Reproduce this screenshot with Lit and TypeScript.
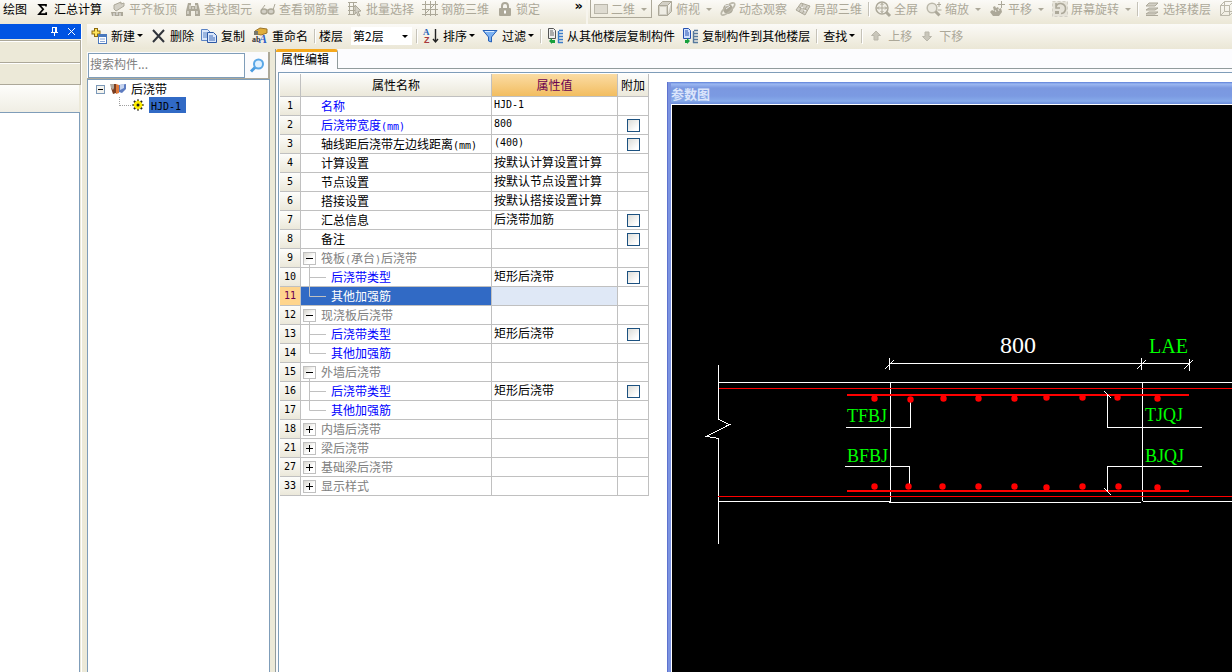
import { LitElement, html, svg, css, nothing, TemplateResult } from "lit";
import { customElement, property } from "lit/decorators.js";
import { classMap } from "lit/directives/class-map.js";

const G = "#aca899";
const L = "#d3d0c6";

const icons: Record<string, TemplateResult> = {
  sigma: svg`<path d="M11 5.5V3.8H4.2L8.2 8.3 4 13.2H11.2V11.2" fill="none" stroke="#000" stroke-width="1.7"/>`,
  align: svg`<path d="M4 4 11 1v2l3-1v3l-8 5-2-2z" fill="${L}" stroke="${G}"/><path d="M1 11h12v4H2z" fill="${G}"/><path d="M4 12v3M7 11v3M10 12v3" stroke="#eee"/>`,
  binoculars: svg`<path d="M3 2h3v3h4V2h3l2 8v5h-5v-5H6v5H1v-5z" fill="${G}"/><path d="M3 10v3M12 10v3M5 4v4M11 4v4M7 7h2" stroke="#f2f0e8"/>`,
  glasses: svg`<ellipse cx="4" cy="10.500" rx="3" ry="2.500" fill="${L}" stroke="${G}" stroke-width="1.400"/><ellipse cx="11" cy="10.500" rx="3" ry="2.500" fill="${L}" stroke="${G}" stroke-width="1.400"/><path d="M7 9h2M2 8l3-4M13 9l2-6" stroke="${G}" fill="none"/>`,
  batch: svg`<path d="M1 1.500h9M1 5.500h8M1 9.500h7M1 13.500h7M2.500 1v13M6.500 1v13" stroke="${G}" fill="none"/><path d="m8 4 6 6-3 .5 2 4-2 .5-1.500-4L8 13z" fill="${L}" stroke="${G}"/>`,
  grid: svg`<path d="M3.500 0v15M8.500 0v15M13.500 0v15M0 3.500h16M0 8.500h16M0 13.500h16M3 13 13 3" stroke="${G}" fill="none"/>`,
  lock: svg`<path d="M5 8V5q0-3 3-3t3 3v3" fill="none" stroke="${G}" stroke-width="2"/><rect x="2" y="7" width="12" height="8" rx="1" fill="${G}"/><path d="M8 9.500v3" stroke="#fff" stroke-width="2"/>`,
  cube: svg`<path d="M1.500 4.500h9v10h-9zM1.500 4.500l4-4h9l-4 4M14.500.5v10l-4 4" fill="${L}" stroke="${G}"/><path d="M3 6h6v7H3z" fill="#efede4"/>`,
  wire: svg`<path d="M1.500 4.500h9v10h-9zM1.500 4.500l4-4h9l-4 4M14.500.5v10l-4 4M5.500.5v10h9M5.500 10.500l-4 4" fill="none" stroke="#bbb8aa"/>`,
  orbit: svg`<circle cx="8" cy="8" r="5" fill="${G}"/><ellipse cx="8" cy="8" rx="8.500" ry="3" transform="rotate(-42 8 8)" fill="none" stroke="#bbb8aa" stroke-width="1.600"/><path d="m5 5 4-1M6 8l4-3" stroke="#eee"/>`,
  local: svg`<path d="m1 9 5-7 9 3-5 9z" fill="${L}" stroke="${G}"/><path d="m4 6 8 3M8 3l-4 8M12 5l-5 8" stroke="${G}"/><path d="m6 6 2 1M9 9l2 1" stroke="#fff"/>`,
  fit: svg`<circle cx="7" cy="7" r="6" fill="#f2f0e8" stroke="${G}" stroke-width="1.500"/><path d="M7 2v10M2 7h10M5.500 4 7 2.500 8.500 4M5.500 10 7 11.500 8.500 10M4 5.500 2.500 7 4 8.500M10 5.500 11.500 7 10 8.500" fill="none" stroke="${G}"/><path d="m11 11 4 4" stroke="${G}" stroke-width="3"/>`,
  zoom: svg`<circle cx="6" cy="7" r="4.800" fill="#ebe9e0" stroke="#bbb8aa" stroke-width="1.500"/><path d="m9.500 10.500 4 4" stroke="${G}" stroke-width="3"/><path d="M13 1v5M11 3.500h4M11.500 9h4" stroke="${G}"/>`,
  pan: svg`<path d="M4 15 1 11l2-2 2 1-1-4 2-1 1 2 2-1 1 2 2-1 1 4-3 4z" fill="${G}"/><path d="M12.500 0v7M9 3.500h7" stroke="${G}"/><path d="m6 9 1 2M9 8l1 2" stroke="#e8e6dc"/>`,
  rotate: svg`<rect x=".5" y=".5" width="15" height="15" fill="#e6e3d9" stroke="${L}" stroke-dasharray="3 2"/><path d="M4 6q1-4 5-3.500 5 1 4.500 6-1 4-4.500 4M4 2v5h4" fill="none" stroke="${G}" stroke-width="1.600"/><rect x="3" y="10" width="4" height="3" fill="${G}"/>`,
  floors: svg`<path d="m2 5 3-3h9l-3 3zM2 9l3-2h9l-3 2zM2 13l3-2h9l-3 2z" fill="${L}" stroke="${G}"/><path d="M2 14.500h12" stroke="${G}"/>`,
  fresh: svg`<path d="M5 0v9M.5 4.500h9" stroke="#8a6a10" stroke-width="4"/><path d="M5 1v7M1.500 4.500h7" stroke="#ffe45c" stroke-width="2"/><rect x="7.500" y="6.500" width="8" height="9" fill="#fff" stroke="#4a78bd"/><path d="M8 8h7" stroke="#4a78bd" stroke-width="2"/><path d="M9 11h5M9 13.500h5" stroke="#8aa6d6"/>`,
  cross: svg`<path d="M3 2 14 14M14 2 3 14" stroke="#30343c" stroke-width="2"/>`,
  copy: svg`<path d="M.5 1.500h6l3 3v8h-9z" fill="#dbe7fb" stroke="#5b83c4"/><path d="M2 5h4M2 7h5M2 9h5" stroke="#5b83c4"/><path d="M6.500 4.500h6l3 3v7h-9z" fill="#dbe7fb" stroke="#2c58a5"/><path d="M8 8h4M8 10h6M8 12h6" stroke="#3c68b5"/>`,
  rename: svg`<path d="m3 3 5-3 7 1v4L9 7 5 6z" fill="#e0ae3c" stroke="#9a742a"/><path d="M2 3h4v4H2z" fill="#77776b"/><text x="0" y="14" font-size="8" font-family="Liberation Serif" font-weight="bold" fill="#333">ab</text><text x="7" y="15" font-size="12" font-family="Liberation Serif" font-weight="bold" font-style="italic" fill="#2b5fcb">A</text>`,
  sort: svg`<text x="0" y="7" font-size="9" font-family="Liberation Serif" font-weight="bold" fill="#2463b8">A</text><text x="1" y="15" font-size="9" font-family="Liberation Sans" font-weight="bold" fill="#a8383c">Z</text><path d="M12.500 1v13M10 11l2.500 3L15 11" fill="none" stroke="#222" stroke-width="1.400"/>`,
  filter: svg`<path d="M1 2.500h14L9.500 9v5l-3-1V9z" fill="#7db2f2" stroke="#2560b8"/><path d="M3 3.500h9" stroke="#d8ebff"/>`,
  from: svg`<path d="M1.500.5h5l2 2v8h-7z" fill="#eee" stroke="#555"/><path d="M3 3h3M3 5h4M3 7h4" stroke="#666"/><path d="M12 2.500h4M11 5.500h5M11 8.500h5M11 11.500h5M11 14.500h5M11.500 3v12" stroke="#3a7cc9" stroke-width="1.400"/><path d="m2 13 3-3v2h3v3H5v1z" fill="#17a03c"/>`,
  to: svg`<path d="M1.500.5h5l2 2v8h-7z" fill="#cfe0ff" stroke="#2450b0"/><path d="M3 3h3M3 5h4M3 7h4" stroke="#2450b0"/><path d="M12 2.500h4M11 5.500h5M11 8.500h5M11 11.500h5M11 14.500h5M11.500 3v12" stroke="#56789c" stroke-width="1.400"/><path d="m8 13-3-3v2H3v3h2v1z" fill="#17a03c"/>`,
  up: svg`<path d="m8 3 4.500 4.500H10V12H6V7.500H3.500z" fill="#c9c6ba" stroke="#b9b6aa"/>`,
  down: svg`<path d="m8 13 4.500-4.500H10V4H6v4.500H3.500z" fill="#c9c6ba" stroke="#b9b6aa"/>`,
  search: svg`<circle cx="9.500" cy="6" r="4.500" fill="#dff0ff" stroke="#5aa7e6" stroke-width="2"/><path d="m6 9.500-4 4" stroke="#4a9be0" stroke-width="3"/>`,
  beam: svg`<path d="M1 3h5v9l-3 1-2-6z" fill="#7a3f22"/><path d="M0 3h4v4L3 9 1 7z" fill="#b0a8a0"/><path d="m6 3 3 1v8l-3 1z" fill="#e07a3a"/><path d="m9 4 7-1v5l-4 4-3-1z" fill="#5e7cc0"/><path d="m10 4 4-1v4l-4 2z" fill="#c5d3ee"/>`,
  gear: svg`<path d="M8 2.500v11M2.500 8h11M4 4l8 8M12 4l-8 8" stroke="#222" stroke-width="2"/><circle cx="8" cy="8" r="4" fill="#ffee00"/><circle cx="8" cy="8" r="1.500" fill="#222"/><path d="M3 8h2M11 8h2M8 3v2M8 11v2" stroke="#ffee00"/>`,
};

const icon = (name: string) =>
  html`<svg class="icon" width="16" height="16" viewBox="0 0 16 16" aria-hidden="true">${icons[name]}</svg>`;

/* Half-width runs are set in a monospaced face, the rest in the CJK face. */
const mixed = (text: string) =>
  text.split(/([\x21-\x7e]+)/).map((t, i) => (i % 2 ? html`<span class="half">${t}</span>` : t));

const shared = css`
  * { box-sizing: border-box; }
  :host { font: 12px/16px "Noto Sans CJK SC", sans-serif; color: #000; }
  button { font: inherit; color: inherit; background: none; border: 0; padding: 0; margin: 0; }
  .half { font-family: "DejaVu Sans Mono", monospace; font-size: 10px; line-height: 10px; }
  .icon { display: block; flex: none; overflow: visible; }
`;

interface Tool { icon?: string; label?: string; menu?: boolean; off?: boolean; sep?: boolean; }

@customElement("tool-strip")
class ToolStrip extends LitElement {
  @property({ attribute: false }) items: Tool[] = [];
  static styles = [
    shared,
    css`
      :host { display: flex; align-items: center; gap: var(--tool-gap, 8px); flex: none; }
      button { display: flex; align-items: center; gap: var(--icon-gap, 3px); white-space: nowrap; }
      button:disabled { color: #aca899; }
      .caret { border: 3px solid transparent; border-top-color: currentColor; border-bottom: 0; margin-left: var(--caret-gap, 3px); }
      .sep { width: 1px; height: 14px; margin: 0 var(--sep-gap, -2px); background: #c5c2b8; box-shadow: 1px 1px 0 #fff; }
    `,
  ];
  render() {
    return this.items.map((t) =>
      t.sep
        ? html`<span class="sep"></span>`
        : html`<button ?disabled=${t.off}>
            ${t.icon ? icon(t.icon) : nothing}<span>${t.label}</span>${t.menu ? html`<span class="caret"></span>` : nothing}
          </button>`
    );
  }
}

interface Row { n: number; name: string; value?: string; kind?: "blue" | "group" | "child"; open?: boolean; last?: boolean; check?: boolean; sel?: boolean; }

const rows: Row[] = [
  { n: 1, name: "名称", value: "HJD-1", kind: "blue" },
  { n: 2, name: "后浇带宽度(mm)", value: "800", kind: "blue", check: true },
  { n: 3, name: "轴线距后浇带左边线距离(mm)", value: "(400)", check: true },
  { n: 4, name: "计算设置", value: "按默认计算设置计算" },
  { n: 5, name: "节点设置", value: "按默认节点设置计算" },
  { n: 6, name: "搭接设置", value: "按默认搭接设置计算" },
  { n: 7, name: "汇总信息", value: "后浇带加筋", check: true },
  { n: 8, name: "备注", check: true },
  { n: 9, name: "筏板(承台)后浇带", kind: "group", open: true },
  { n: 10, name: "后浇带类型", value: "矩形后浇带", kind: "child", check: true },
  { n: 11, name: "其他加强筋", kind: "child", last: true, sel: true },
  { n: 12, name: "现浇板后浇带", kind: "group", open: true },
  { n: 13, name: "后浇带类型", value: "矩形后浇带", kind: "child", check: true },
  { n: 14, name: "其他加强筋", kind: "child", last: true },
  { n: 15, name: "外墙后浇带", kind: "group", open: true },
  { n: 16, name: "后浇带类型", value: "矩形后浇带", kind: "child", check: true },
  { n: 17, name: "其他加强筋", kind: "child", last: true },
  { n: 18, name: "内墙后浇带", kind: "group" },
  { n: 21, name: "梁后浇带", kind: "group" },
  { n: 27, name: "基础梁后浇带", kind: "group" },
  { n: 33, name: "显示样式", kind: "group" },
];

@customElement("property-grid")
class PropertyGrid extends LitElement {
  static styles = [
    shared,
    css`
      :host { display: block; flex: none; }
      table { border-collapse: separate; border-spacing: 0; table-layout: fixed; width: 369px; }
      .c-no { width: 21px; } .c-name { width: 191px; } .c-value { width: 126px; } .c-extra { width: 31px; }
      th, td { padding: 0; border: solid #c0c0c0; border-width: 0 1px 1px 0; font-weight: normal; white-space: nowrap; height: 19px; line-height: 16px; text-align: left; }
      thead th { height: 23px; text-align: center; background: linear-gradient(#fdfdfb, #ebe8da); }
      thead .hot { background: linear-gradient(#fbdca4, #f2bd60); color: #6a0050; }
      tbody th { text-align: center; background: linear-gradient(#fdfdfb, #ebe8da); }
      .cell { display: flex; align-items: center; height: 18px; }
      .name > span:last-child { line-height: 16px; }
      .lead { flex: none; width: 20px; height: 18px; display: flex; align-items: center; padding-left: 2px; position: relative; }
      .lead.wide { width: 30px; padding: 0; }
      .lead svg { overflow: visible; display: block; }
      .stem { position: absolute; left: 8px; top: 15px; width: 1px; height: 4px; background: #c0c0c0; }
      .toggle { width: 13px; height: 13px; border: 1px solid #c0c0c0; background: linear-gradient(135deg, #d8d6cf, #fff 60%); }
      .toggle svg { width: 11px; height: 11px; }
      .blue, .child { color: #0000ff; }
      .group { color: #808080; }
      .no { justify-content: center; }
      .value { padding: 0 0 2px 2px; }
      .sel .name { background: #316ac5; color: #fff; }
      .sel .value { background: #dfe8f6; }
      .sel th { background: #ffd58d; color: #6a0050; }
      input { appearance: none; display: block; width: 13px; height: 13px; margin: 1px 0 0 9px; border: 1px solid #1c5180; background: linear-gradient(135deg, #dcdcd7, #fff 80%); }
    `,
  ];
  lead(r: Row) {
    if (r.kind === "group")
      return html`<span class="lead"><button class="toggle" aria-label="${r.open ? "折叠" : "展开"}"><svg viewBox="0 0 11 11"><path d=${r.open ? "M2 5.5h7" : "M2 5.5h7M5.5 2v7"} stroke="#000" /></svg></button>${r.open ? html`<span class="stem"></span>` : nothing}</span>`;
    if (r.kind === "child")
      return html`<span class="lead wide"><svg width="30" height="18"><path d=${r.last ? "M8.5 -1V9.5H25" : "M8.5 0V19M8.5 9.5H25"} stroke="#c0c0c0" fill="none" /></svg></span>`;
    return html`<span class="lead"></span>`;
  }
  render() {
    return html`<table>
      <colgroup><col class="c-no" /><col class="c-name" /><col class="c-value" /><col class="c-extra" /></colgroup>
      <thead><tr><th></th><th>属性名称</th><th class="hot">属性值</th><th>附加</th></tr></thead>
      <tbody>
        ${rows.map(
          (r) => html`<tr class=${classMap({ sel: !!r.sel })}>
            <th><div class="cell no">${mixed(String(r.n))}</div></th>
            <td><div class="cell name ${r.kind ?? ""}">${this.lead(r)}<span>${mixed(r.name)}</span></div></td>
            <td><div class="cell value">${mixed(r.value ?? "")}</div></td>
            <td>${r.check ? html`<input type="checkbox" aria-label="附加 ${r.name}" />` : nothing}</td>
          </tr>`
        )}
      </tbody>
    </table>`;
  }
}

const topDots = [[874, 398], [910, 399], [943, 398], [978, 398], [1014, 398], [1046, 397], [1082, 397], [1117, 397], [1157, 398]];
const bottomDots = [[874, 486], [908, 486], [942, 486], [978, 486], [1014, 486], [1046, 487], [1082, 486], [1118, 486], [1157, 487]];

@customElement("section-drawing")
class SectionDrawing extends LitElement {
  static styles = css`
    :host { display: block; flex: 1; min-height: 0; overflow: hidden; background: #000; }
    svg { display: block; }
    .w { stroke: #fff; fill: none; }
    .r { stroke: #f00; fill: none; }
    .thick { stroke-width: 2; }
    .dot { fill: #f00; }
    text { font-family: "Liberation Serif", serif; font-size: 18px; fill: #0f0; }
    .dim { font-size: 24px; fill: #fff; }
    .lap { font-size: 20px; }
  `;
  render() {
    return html`<svg width="720" height="567" viewBox="672 105 720 567">
      <g shape-rendering="crispEdges">
        <path class="w" d="M718.5 365V419.500L729.500 424.500 706.500 436.500 718.500 438.500V544" />
        <path class="w" d="M718 382.500H1392M718 501.500H890M889 502.500H1141M1143 501.500H1392M890.500 382V502M1142.500 382V501" />
        <path class="w" d="M889 363.500H1190M889.500 358V370M1141.500 358V370M1189.500 359V371M885 369l9-9M1137 369l9-9M1184 369l9-9" />
        <path class="r" d="M719 388.500H1392M718 496.500H1392" />
        <path class="r thick" d="M847 395H1189M847 491H1189" />
        <path class="w" d="M846 427.500H910.500V400M845 466.500H909.500V486M1104 391l7 7M1107.500 395V427.500H1202M1104 488l7 7M1107.500 491V466.500H1202" />
      </g>
      ${[...topDots, ...bottomDots].map(([x, y]) => svg`<circle class="dot" cx=${x + 0.5} cy=${y + 0.5} r="3.2" />`)}
      <text class="dim" x="1000" y="353">800</text>
      <text class="lap" x="1149" y="353">LAE</text>
      <text x="847" y="422">TFBJ</text>
      <text x="847" y="462">BFBJ</text>
      <text x="1145" y="421">TJQJ</text>
      <text x="1145" y="462">BJQJ</text>
    </svg>`;
  }
}

@customElement("app-root")
class AppRoot extends LitElement {
  static styles = [
    shared,
    css`
      :host { display: flex; flex-direction: column; height: 100vh; overflow: hidden; background: #ece9d8; }
      .bar { display: flex; height: 24px; flex: none; }
      .seg { display: flex; align-items: center; overflow: hidden; background: linear-gradient(#fbfaf7, #ebe7d6); padding-bottom: 6px; }
      .seg.first { width: 588px; flex: none; padding-left: 3px; border-right: 2px solid #f7f5ee; }
      .seg.second { flex: 1; gap: 5px; padding-left: 2px; }
      .more { margin-left: auto; margin-right: 3px; align-self: flex-start; line-height: 12px; font-size: 13px; font-weight: bold; font-family: "DejaVu Sans", sans-serif; }
      .combo { display: flex; align-items: center; position: relative; }
      select { appearance: none; font: inherit; border: 0; border-radius: 0; margin: 0; background: none; color: inherit; opacity: 1; }
      .view { width: 62px; height: 18px; flex: none; border: 1px solid #aca899; border-top: 0; color: #aca899; }
      .view select { width: 100%; height: 16px; padding: 0 0 0 20px; line-height: 16px; }
      .swatch { position: absolute; left: 3px; top: 4px; width: 14px; height: 10px; border: 1px solid #b9b6aa; background: #dedbd1; }
      .drop { position: absolute; right: 4px; top: 50%; margin-top: -1px; border: 3px solid transparent; border-top-color: currentColor; border-bottom: 0; pointer-events: none; }
      .body { display: flex; flex: 1; min-height: 0; }
      .dock { width: 82px; flex: none; display: flex; flex-direction: column; border-right: 1px solid #fff; }
      .title { height: 15px; flex: none; background: #0054e3; display: flex; justify-content: flex-end; align-items: center; gap: 8px; padding-right: 5px; }
      .title svg { display: block; }
      .group1, .group2 { height: 22px; flex: none; border: solid #aca899; border-width: 1px 1px 0 0; box-shadow: inset 0 1px #fff; margin-top: 1px; }
      .group2 { border-width: 1px 1px 1px 0; margin-top: 0; height: 23px; }
      .group3 { height: 27px; flex: none; background: linear-gradient(#fdfdfb, #f0eee4); margin-right: 2px; }
      .blank { flex: 1; background: #fff; border: solid #7f9db9; border-width: 1px 1px 0 0; margin-right: 1px; }
      .main { flex: 1; min-width: 0; display: flex; flex-direction: column; padding-left: 5px; }
      .tools { height: 25px; flex: none; display: flex; align-items: center; gap: 5px; overflow: hidden; padding: 0 0 2px 4px; background: linear-gradient(#fbfaf7, #ebe7d6); --tool-gap: 7px; --icon-gap: 4px; --caret-gap: -2px; --sep-gap: -1px; }
      .floor { width: 61px; height: 18px; margin-left: 3px; background: #fff; flex: none; }
      .floor select { width: 100%; height: 18px; padding: 0 0 0 2px; line-height: 16px; }
      .work { flex: 1; min-height: 0; display: flex; }
      .nav { width: 183px; flex: none; display: flex; flex-direction: column; padding-top: 3px; }
      .search { display: flex; height: 27px; flex: none; background: #fbfbfd; border-right: 2px solid #aca899; border-bottom: 1px solid #aca899; padding: 1px 0 0 1px; }
      .search input { width: 157px; height: 25px; border: 1px solid #7f9db9; padding: 0 1px 4px; font: inherit; background: #fff; outline: 0; }
      .search input::placeholder { color: #808080; opacity: 1; }
      .search button { flex: 1; display: grid; place-items: center; }
      .tree { flex: 1; background: #fff; border: solid #7f9db9; border-width: 1px 1px 0 1px; padding: 1px 0 0 8px; }
      .node { display: flex; align-items: center; height: 16px; }
      .box { width: 9px; height: 9px; border: 1px solid #7b98b8; background: #f4f3ee; display: grid; place-items: center; }
      .box::after { content: ""; width: 5px; height: 1px; background: #000; }
      .node .icon { margin: 0 5px; }
      .branch { width: 12px; height: 9px; margin: 0 0 8px 23px; border: dotted #a0a0a0; border-width: 0 0 1px 1px; }
      .node .branch + .icon { margin: 0 3px 0 -1px; }
      .mark { background: #316ac5; padding: 0 5px 0 2px; height: 16px; line-height: 15px; }
      .editor { flex: 1; min-width: 0; display: flex; flex-direction: column; margin-left: 5px; background: #fcfcfe; border-left: 1px solid #919b9c; }
      .tabs { display: flex; height: 20px; flex: none; align-items: stretch; border-bottom: 1px solid #919b9c; }
      .tab { border-top: 3px solid #f5a81c; border-right: 1px solid #919b9c; border-radius: 2px 3px 0 0; background: #fcfcfe; margin-bottom: -1px; padding: 0 8px 3px 5px; line-height: 14px; height: 20px; }
      .page { flex: 1; min-height: 0; margin: 3px 0 0 2px; border: solid #7f9db9; border-width: 1px 0 0 1px; background: #fff; display: flex; align-items: flex-start; padding: 1px 0 0 1px; }
      .window { flex: 1; min-width: 0; align-self: stretch; margin: 8px 0 0 18px; display: flex; flex-direction: column; background: #7b93e0; padding-left: 3px; border-left: 1px solid #5d72cf; }
      .caption { height: 22px; flex: none; background: linear-gradient(#5c7fd8, #9cb8f2 2px, #7b98e0 6px, #7b9ae2 14px, #86aaea 19px, #6a8cdc); color: #dbe5fb; font-weight: bold; font-size: 13px; line-height: 24px; }
      .canvas { flex: 1; min-height: 0; display: flex; border: solid #fff; border-width: 1px 0 0 1px; }
    `,
  ];
  render() {
    return html`
      <div class="bar">
        <div class="seg first">
          <tool-strip .items=${[{ label: "绘图" }, { icon: "sigma", label: "汇总计算" },
            { icon: "align", label: "平齐板顶", off: true }, { icon: "binoculars", label: "查找图元", off: true },
            { icon: "glasses", label: "查看钢筋量", off: true }, { icon: "batch", label: "批量选择", off: true },
            { icon: "grid", label: "钢筋三维", off: true }, { icon: "lock", label: "锁定", off: true }]}></tool-strip>
          <button class="more">»</button>
        </div>
        <div class="seg second">
          <span class="combo view"><span class="swatch"></span><select disabled aria-label="视图"><option>二维</option></select><span class="drop"></span></span>
          <tool-strip .items=${[{ icon: "cube", label: "俯视", menu: true, off: true }, { icon: "orbit", label: "动态观察", off: true },
            { icon: "local", label: "局部三维", off: true }, { sep: true }, { icon: "fit", label: "全屏", off: true },
            { icon: "zoom", label: "缩放", menu: true, off: true }, { icon: "pan", label: "平移", menu: true, off: true },
            { icon: "rotate", label: "屏幕旋转", menu: true, off: true }, { sep: true }, { icon: "floors", label: "选择楼层", off: true },
            { icon: "wire", label: "", off: true }]}></tool-strip>
        </div>
      </div>
      <div class="body">
        <aside class="dock">
          <div class="title">
            <button aria-label="固定"><svg width="9" height="9"><path d="M2.500 0V5.500M2 .5h4M5.500 0v5.500M6.500 0v5.500M1 5.500h7M4.500 5v4" stroke="#fff" fill="none" /></svg></button>
            <button aria-label="关闭"><svg width="9" height="9"><path d="m1 1 7 7M8 1 1 8" stroke="#fff" /></svg></button>
          </div>
          <div class="group1"></div><div class="group2"></div><div class="group3"></div><div class="blank"></div>
        </aside>
        <main class="main">
          <div class="tools">
            <tool-strip .items=${[{ icon: "fresh", label: "新建", menu: true }, { icon: "cross", label: "删除" },
              { icon: "copy", label: "复制" }, { icon: "rename", label: "重命名" }, { sep: true }]}></tool-strip>
            <label for="floor">楼层</label>
            <span class="combo floor"><select id="floor"><option>第2层</option></select><span class="drop"></span></span>
            <tool-strip .items=${[{ sep: true }, { icon: "sort", label: "排序", menu: true }, { icon: "filter", label: "过滤", menu: true }, { sep: true },
              { icon: "from", label: "从其他楼层复制构件" }, { icon: "to", label: "复制构件到其他楼层" }, { sep: true },
              { label: "查找", menu: true }, { sep: true }, { icon: "up", label: "上移", off: true }, { icon: "down", label: "下移", off: true }]}></tool-strip>
          </div>
          <div class="work">
            <nav class="nav">
              <div class="search"><input type="text" placeholder="搜索构件..." aria-label="搜索构件" /><button aria-label="搜索">${icon("search")}</button></div>
              <div class="tree">
                <div class="node"><span class="box"></span>${icon("beam")}<span>后浇带</span></div>
                <div class="node"><span class="branch"></span>${icon("gear")}<span class="mark">${mixed("HJD-1")}</span></div>
              </div>
            </nav>
            <section class="editor">
              <div class="tabs"><button class="tab">属性编辑</button></div>
              <div class="page">
                <property-grid></property-grid>
                <section class="window">
                  <div class="caption">参数图</div>
                  <div class="canvas"><section-drawing></section-drawing></div>
                </section>
              </div>
            </section>
          </div>
        </main>
      </div>
    `;
  }
}
